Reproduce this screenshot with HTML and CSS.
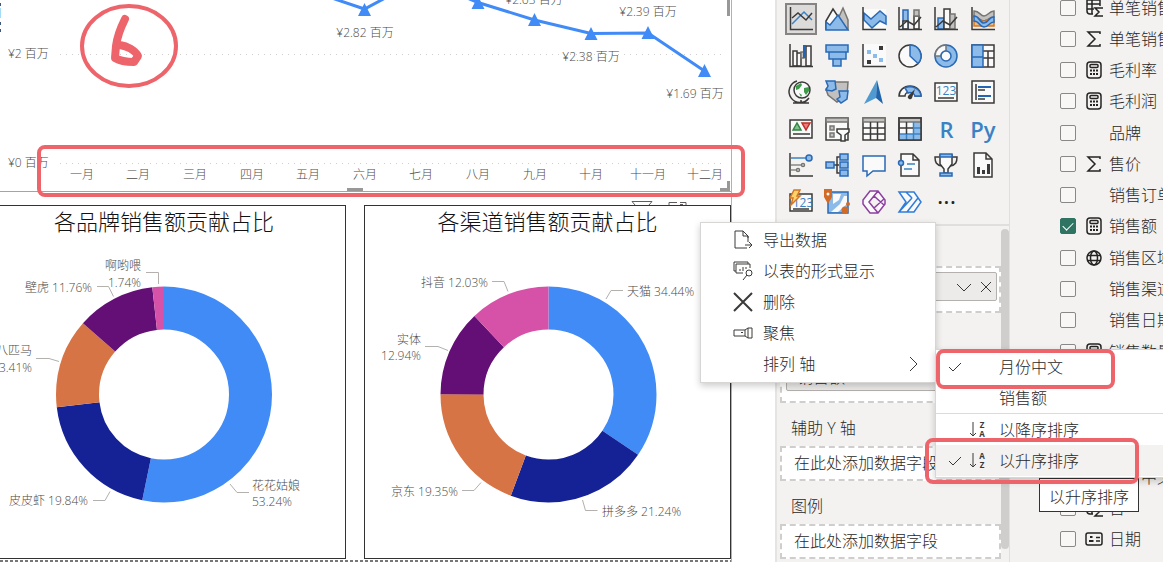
FILE: index.html
```html
<!DOCTYPE html>
<html lang="zh-CN">
<head>
<meta charset="utf-8">
<meta name="viewport" content="width=device-width, initial-scale=1">
<title>销售报表</title>
<link rel="stylesheet" href="styles.css">
</head>
<body>
<div class="app">
  <main class="canvas">
    <div class="report">
      <section class="line-visual">
        <svg class="chart" viewBox="0 0 731 191" role="img" aria-label="各月销售额">
          <path class="edge-light" d="M0 8h1v10h-1z"/>
          <path class="edge-dark" d="M0 3h1v3h-1zM0 22h1v3h-1zM0 29h1v3h-1z"/>
          <path class="gridline" d="M60 54.500H724M60 163.500H724"/>
          <polyline class="series" points="308,-10 364.500,9 421,-21 478,2.500 534.500,20 591,33.500 648,33 704.500,71"/>
          <path class="marker" d="M364.500 3l6.500 13h-13zM478-4l6.500 13h-13zM534.500 13l6.500 13h-13zM591 27l6.500 13h-13zM648 26l6.500 13h-13zM704.500 64l6.500 13h-13z"/>
          <g class="label">
            <text x="8" y="58">¥2 百万</text>
            <text x="8" y="167">¥0 百万</text>
          </g>
          <g class="label mid">
            <text x="365" y="37">¥2.82 百万</text>
            <text x="534" y="4">¥2.63 百万</text>
            <text x="591" y="61">¥2.38 百万</text>
            <text x="648" y="16">¥2.39 百万</text>
            <text x="695" y="98">¥1.69 百万</text>
            <text x="82" y="179">一月</text>
            <text x="138" y="179">二月</text>
            <text x="195" y="179">三月</text>
            <text x="252" y="179">四月</text>
            <text x="308" y="179">五月</text>
            <text x="365" y="179">六月</text>
            <text x="421" y="179">七月</text>
            <text x="478" y="179">八月</text>
            <text x="535" y="179">九月</text>
            <text x="591" y="179">十月</text>
            <text x="648" y="179">十一月</text>
            <text x="705" y="179">十二月</text>
          </g>
          <path class="handle" d="M347 188h16v3h-16zM727 0h3v16h-3zM727 181h3v10h-10v-3h7z"/>
        </svg>
      </section>
      <div class="visual-tools">
        <svg width="22" height="4" viewBox="0 0 22 4"><path d="M1 .500H21L18 4M1 .500L4 4"/></svg>
        <svg width="20" height="4" viewBox="0 0 20 4"><path d="M1 4V1.500H9M12 1.500H18V4M12 3.500H15"/></svg>
      </div>
      <div class="cards">
        <section class="card">
          <h2>各品牌销售额贡献占比</h2>
          <svg class="chart" viewBox="-18 236 362 322" role="img" aria-label="各品牌销售额贡献占比">
            <g class="ring" transform="rotate(-90 163 394.500)">
              <circle class="c1" cx="163" cy="394.500" r="86.500" pathLength="100" stroke-dasharray="53.240 100"/>
              <circle class="c2" cx="163" cy="394.500" r="86.500" pathLength="100" stroke-dasharray="19.840 100" stroke-dashoffset="-53.240"/>
              <circle class="c3" cx="163" cy="394.500" r="86.500" pathLength="100" stroke-dasharray="13.410 100" stroke-dashoffset="-73.080"/>
              <circle class="c4" cx="163" cy="394.500" r="86.500" pathLength="100" stroke-dasharray="11.760 100" stroke-dashoffset="-86.490"/>
              <circle class="c5" cx="163" cy="394.500" r="86.500" pathLength="100" stroke-dasharray="1.750 100" stroke-dashoffset="-98.250"/>
            </g>
            <path class="leader" d="M145 272.500h12.500V284M96 286.500h11.500l5 10M35 358.500h13l10 3M92 500.500h12l5-9M229 484l7 8.500h12"/>
            <g class="label end">
              <text x="140" y="270">啊哟喂</text>
              <text x="140" y="287">1.74%</text>
              <text x="91" y="292">壁虎 11.76%</text>
              <text x="31" y="355">八匹马</text>
              <text x="31" y="372">13.41%</text>
              <text x="87" y="505">皮皮虾 19.84%</text>
            </g>
            <g class="label">
              <text x="251" y="490">花花姑娘</text>
              <text x="251" y="506">53.24%</text>
            </g>
          </svg>
        </section>
        <section class="card">
          <h2>各渠道销售额贡献占比</h2>
          <svg class="chart" viewBox="365 236 365 322" role="img" aria-label="各渠道销售额贡献占比">
            <g class="ring" transform="rotate(-90 548.500 394.500)">
              <circle class="c1" cx="548.500" cy="394.500" r="86.500" pathLength="100" stroke-dasharray="34.440 100"/>
              <circle class="c2" cx="548.500" cy="394.500" r="86.500" pathLength="100" stroke-dasharray="21.240 100" stroke-dashoffset="-34.440"/>
              <circle class="c3" cx="548.500" cy="394.500" r="86.500" pathLength="100" stroke-dasharray="19.350 100" stroke-dashoffset="-55.680"/>
              <circle class="c4" cx="548.500" cy="394.500" r="86.500" pathLength="100" stroke-dasharray="12.940 100" stroke-dashoffset="-75.030"/>
              <circle class="c5" cx="548.500" cy="394.500" r="86.500" pathLength="100" stroke-dasharray="12.030 100" stroke-dashoffset="-87.970"/>
            </g>
            <path class="leader" d="M492 281.500h12l4 10M606 299l5-8.500h12M425 346.500h13l10 4M462 490.500h12l7-8M582.500 500l3 10.500h12"/>
            <g class="label end">
              <text x="488" y="287">抖音 12.03%</text>
              <text x="421" y="344">实体</text>
              <text x="421" y="360">12.94%</text>
              <text x="458" y="496">京东 19.35%</text>
            </g>
            <g class="label">
              <text x="627" y="296">天猫 34.44%</text>
              <text x="602" y="516">拼多多 21.24%</text>
            </g>
          </svg>
        </section>
      </div>
      <div class="page-edge"></div>
    </div>
  </main>

  <aside class="viz-pane" aria-label="可视化">
    <div class="gallery">
      <button class="on" aria-label="折线图"><svg viewBox="0 0 24 24"><path class="k" d="M1.500 0V22.500H24"/><path class="b" d="M3 17L15 5l8 8"/><path class="k" d="M3 11l6-5 8 7 6-7"/></svg></button>
      <button aria-label="分区图"><svg viewBox="0 0 24 24"><path class="gf" d="M12 14L18 1l5 12v9z"/><path class="wk" d="M1 14L8 2l8 12-4 8H1z"/><path class="bf" d="M1 23V15l4 3 8-10 10 15z"/></svg></button>
      <button aria-label="堆积面积图"><svg viewBox="0 0 24 24"><path class="w" d="M2 2h22v20H2z"/><path class="bf" d="M2 6l7 6 9-8 6 5v8l-6-3-8 7-8-8z"/><path class="k" d="M1 0V22.500H24"/></svg></button>
      <button aria-label="折线和堆积柱形图"><svg viewBox="0 0 24 24"><path class="bf" d="M5 3h5v19H5z"/><path class="wk" d="M5 14h5v8H5zM16 9h5v13h-5z"/><path class="gf" d="M16 3h5v6h-5z"/><path class="k" d="M1 0V22.500H24M2 20l7-6 7 4 7-8"/></svg></button>
      <button aria-label="折线和簇状柱形图"><svg viewBox="0 0 24 24"><path class="bf" d="M4 11h6v11H4z"/><path class="wk" d="M10 2h6v20h-6z"/><path class="gf" d="M16 7h5v15h-5z"/><path class="k" d="M1 0V22.500H24M2 20l7-6 7 4 7-8"/></svg></button>
      <button aria-label="功能区图表"><svg viewBox="0 0 24 24"><path class="gf" d="M3 4c6 0 6 5 10 5s5-5 10-5v6c-5 0-6 4-10 4S8 10 3 10z"/><path class="of" d="M3 14h8v5H3zM15 13h8v6h-8z"/><path class="bf" d="M3 9c6 0 5 7 10 7s5-7 10-6v5c-5 0-5 5-10 5S9 14 3 14z"/><path class="k" d="M1 0V22.500H24"/></svg></button>

      <button aria-label="瀑布图"><svg viewBox="0 0 24 24"><path class="wk" d="M4 7h4v15H4zM8 9h4v13H8zM17 2h5v20h-5z"/><path class="gf" d="M12 8h3v6h-3z"/><path class="bb" d="M14 1h3v13h-3z"/><path class="k" d="M1 0V22.500H24"/></svg></button>
      <button aria-label="漏斗图"><svg viewBox="0 0 24 24"><path class="bf" d="M1 1h22v7H1zM4 8h17v7H4zM8 15h8v7H8z"/></svg></button>
      <button aria-label="散点图"><svg viewBox="0 0 24 24"><path class="w" d="M2 0h22v22H2z"/><path class="kk" d="M17 2h4v4h-4zM5 16h4v4H5z"/><path class="bl" d="M5 6h4v4H5zM11 10h4v4h-4zM17 14h4v4h-4z"/><path class="k" d="M1 0V22.500H24"/></svg></button>
      <button aria-label="饼图"><svg viewBox="0 0 24 24"><circle class="wk" cx="12" cy="12" r="11"/><path class="bf" d="M12 1v11l8 7.500A11 11 0 0 0 12 1z"/></svg></button>
      <button aria-label="环形图"><svg viewBox="0 0 24 24"><circle class="bf" cx="12" cy="12" r="11"/><path class="wg" d="M1 12A11 11 0 0 1 12 1v6a5 5 0 0 0-5 5z"/><circle class="wb" cx="12" cy="12" r="5"/></svg></button>
      <button aria-label="树状图"><svg viewBox="0 0 24 24"><path class="wk" d="M1 1h22v22H1zM12 7h11M12 14h11M17 7v16"/><path class="bf" d="M1 1h11v22H1zM1 13h11"/></svg></button>

      <button aria-label="地图"><svg viewBox="0 0 24 24"><circle class="wk" cx="13" cy="10" r="8"/><path class="green" d="M7 6l5-3 1 2-3 4-3 1zM15 8l5-1v4l-3 4-2-3zM10 13l3 2-1 2z"/><path class="k" d="M8 1a11 11 0 1 0 12 17M12 20v3M4 23h16"/></svg></button>
      <button aria-label="着色地图"><svg viewBox="0 0 24 24"><path class="gf" d="M9 2h14l-1 14-10 6-9-7-2-6z"/><path class="bf" d="M1 1h9l1 8-4 2-6-1 2-4zM14 11h9l-1 8-6 4-4-4 3-2z"/></svg></button>
      <button aria-label="箭头地图"><svg viewBox="0 0 24 24"><path fill="#4f9ad0" d="M15 0L2 24l12-6z"/><path fill="#1f65ac" d="M15 0l6 24-7-6z"/></svg></button>
      <button aria-label="仪表"><svg viewBox="0 0 24 24"><path class="wk" d="M1 16a11 10 0 0 1 22 0h-6a5 4 0 0 0-10 0z"/><path class="bf" d="M7 8a11 10 0 0 1 16 8h-6a5 4 0 0 0-7-3z"/><path class="kk" d="M17 9l-3 9a2 2 0 0 1-4-2z"/></svg></button>
      <button aria-label="卡片图"><svg viewBox="0 0 24 24"><path class="wk" d="M1 3h22v18H1z"/><text class="num" x="12" y="15">123</text><path class="k" d="M4 18h16"/></svg></button>
      <button aria-label="多行卡"><svg viewBox="0 0 24 24"><path class="wk" d="M1 1h22v22H1zM5 4v16"/><path class="bb" d="M7 6h13v2H7zM7 15h13v2H7z"/><path class="k" d="M7 10h7M7 19h7"/></svg></button>

      <button aria-label="KPI"><svg viewBox="0 0 24 24"><path class="wk" d="M1 3h22v18H1z"/><path class="gt" d="M4 13l4-7 4 7z"/><path class="rt" d="M13 6h8l-4 7z"/><path class="k" d="M4 17h17"/></svg></button>
      <button aria-label="切片器"><svg viewBox="0 0 24 24"><path class="wk" d="M1 1h22v22H1z"/><path class="gf" d="M1 1h22v4H1zM5 9h4v4H5zM5 16h4v4H5z"/><path class="wk" d="M12 12h12v3l-4 3v6h-4v-6l-4-3z"/></svg></button>
      <button aria-label="表"><svg viewBox="0 0 24 24"><path class="wk" d="M1 1h22v22H1z"/><path class="gf" d="M1 1h22v4H1z"/><path class="k" d="M1 11h22M1 17h22M8.500 5v18M15.500 5v18"/></svg></button>
      <button aria-label="矩阵"><svg viewBox="0 0 24 24"><path class="wk" d="M1 1h22v22H1z"/><path class="bl" d="M15 5h8v18H1v-6h14z"/><path class="gf" d="M1 1h22v4H1z"/><path class="b" d="M1 17h22M15.500 5v18M15.500 11H23M8.500 17v6"/><path class="k" d="M1 11h14M8.500 5v12M1 1h22v22H1z"/></svg></button>
      <button class="script">R</button>
      <button class="script">Py</button>

      <button aria-label="关键影响者"><svg viewBox="0 0 24 24"><path class="b" d="M2 5h15"/><circle class="bf" cx="20" cy="5" r="3"/><path class="g" d="M2 12h11M2 17h6"/><circle class="wg" cx="14" cy="12" r="1.500"/><circle class="wg" cx="9" cy="17" r="1.500"/><path class="k" d="M1 0V23H24"/></svg></button>
      <button aria-label="分解树"><svg viewBox="0 0 24 24"><path class="k" d="M9 12h5M20 4h-8v16h8"/><path class="bf" d="M1 9h8v6H1zM15 1h8v6h-8zM15 9h8v6h-8zM15 17h8v6h-8z"/></svg></button>
      <button aria-label="问答"><svg viewBox="0 0 24 24"><path class="wb" d="M1 3h22v15H11l-6 5v-5H1z"/></svg></button>
      <button aria-label="智能叙述"><svg viewBox="0 0 24 24"><path class="wk" d="M3 1h12l6 6v16H3zM15 1v6h6"/><circle class="bf" cx="3" cy="10" r="2.500"/><path class="b" d="M9 11h8M6 16h8"/></svg></button>
      <button aria-label="目标"><svg viewBox="0 0 24 24"><path class="wk" d="M6 2h12v9l-4 5v4h-4v-4l-4-5z"/><path class="k" d="M6 4H1c0 5 1 8 7 9M18 4h5c0 5-1 8-7 9"/><path class="bf" d="M6 1h12v3H6zM6 20h12v3H6z"/></svg></button>
      <button aria-label="分页报表"><svg viewBox="0 0 24 24"><path class="wk" d="M3 0h12l6 6v18H3zM15 0v6h6"/><path class="kk" d="M6 14h3v7H6zM11 17h3v4h-3zM16 11h3v10h-3z"/></svg></button>

      <button aria-label="卡片图（新）"><svg viewBox="0 0 24 24"><path class="wk" d="M1 4h22v17H1z"/><text class="num" x="14" y="17">123</text><path class="k" d="M4 19h16"/><path class="yf" d="M5 0h6L8 6h3L2 15l2-7H1z"/></svg></button>
      <button aria-label="ArcGIS"><svg viewBox="0 0 24 24"><path class="bf" d="M3 2h20v21H3z"/><path class="w" d="M8 4h8l-2 6-6 4zM19 6h3v8l-9 8H6l9-8z"/><path fill="#d16b25" d="M-1-1h8v8l-4 7-4-7z"/><circle class="w" cx="3" cy="4" r="1.500"/><circle fill="#d16b25" cx="20" cy="20" r="3.500"/><circle fill="#d16b25" cx="23" cy="14" r="2"/></svg></button>
      <button aria-label="Power Apps"><svg viewBox="0 0 24 24"><path class="p" d="M8 1h8l7 9v4l-7 9H8l-7-9v-4zM16 1L7 12l9 11M12 6l10 9M22 9L12 18"/></svg></button>
      <button aria-label="Power Automate"><svg viewBox="0 0 24 24"><path class="auto" d="M1 2h15l7 10-7 10H1l7-10zM1 22L14 8M9 22l11-14M8 2l6 6"/></svg></button>
      <button class="more" aria-label="更多视觉对象">···</button>
    </div>
    <div class="wells">
      <div class="well-list">
        <h3>X 轴</h3>
        <div class="well"><div class="pill"><span>月份中文</span><svg width="36" height="14" viewBox="0 0 36 14"><path d="M1 4l7 7 7-7M25 2l10 10M35 2L25 12"/></svg></div></div>
        <h3>Y 轴</h3>
        <div class="well"><div class="pill"><span>销售额</span></div></div>
        <h3>辅助 Y 轴</h3>
        <div class="well hint">在此处添加数据字段</div>
        <h3>图例</h3>
        <div class="well hint">在此处添加数据字段</div>
      </div>
      <div class="scroll"><div class="thumb"></div></div>
    </div>
  </aside>

  <aside class="fields-pane" aria-label="数据">
    <svg class="defs" width="0" height="0" aria-hidden="true">
      <symbol id="sum" viewBox="0 0 18 18"><path d="M15 4V2H3l7 7-7 7h12v-2"/></symbol>
      <symbol id="calc" viewBox="0 0 18 18"><rect x="2" y="1" width="14" height="16" rx="3"/><rect x="5" y="3.500" width="8" height="3" rx="1"/><path class="dots" d="M5 9.500h2M8 9.500h2M11 9.500h2M5 13h2M8 13h2M11 13h2"/></symbol>
      <symbol id="tsum" viewBox="0 0 18 18"><path d="M8 15H5a3 3 0 0 1-3-3V1h13v6M2 5h13M7 1v14M2 10h7M18 9h-8l4 4-4 4h8"/></symbol>
      <symbol id="globe" viewBox="0 0 18 18"><circle cx="9" cy="9" r="7"/><ellipse cx="9" cy="9" rx="3.500" ry="7"/><path d="M2.500 6.500h13M2.500 11.500h13"/></symbol>
      <symbol id="idcard" viewBox="0 0 18 18"><rect x="1" y="3" width="16" height="12" rx="2"/><path class="dots" d="M5 7h2.500M4 11h4.500"/><path d="M11 7.500h4M11 11h4"/></symbol>
    </svg>
    <ul class="fields">
      <li><label><input type="checkbox"><svg><use href="#tsum"/></svg><span>单笔销售额</span></label></li>
      <li><label><input type="checkbox"><svg><use href="#sum"/></svg><span>单笔销售量</span></label></li>
      <li><label><input type="checkbox"><svg><use href="#calc"/></svg><span>毛利率</span></label></li>
      <li><label><input type="checkbox"><svg><use href="#calc"/></svg><span>毛利润</span></label></li>
      <li><label><input type="checkbox"><svg></svg><span>品牌</span></label></li>
      <li><label><input type="checkbox"><svg><use href="#sum"/></svg><span>售价</span></label></li>
      <li><label><input type="checkbox"><svg></svg><span>销售订单</span></label></li>
      <li><label><input type="checkbox" checked><svg><use href="#calc"/></svg><span>销售额</span></label></li>
      <li><label><input type="checkbox"><svg><use href="#globe"/></svg><span>销售区域</span></label></li>
      <li><label><input type="checkbox"><svg></svg><span>销售渠道</span></label></li>
      <li><label><input type="checkbox"><svg></svg><span>销售日期</span></label></li>
      <li><label><input type="checkbox"><svg><use href="#calc"/></svg><span>销售数量</span></label></li>
      <li class="fold"></li>
      <li><label><input type="checkbox"><svg></svg><span>月份中文</span></label></li>
      <li><label><input type="checkbox"><svg><use href="#tsum"/></svg><span>日</span></label></li>
      <li><label><input type="checkbox"><svg><use href="#idcard"/></svg><span>日期</span></label></li>
      <li></li>
    </ul>
  </aside>
</div>

<div class="menu main-menu" role="menu">
  <button role="menuitem"><svg viewBox="0 0 20 20"><path d="M15 8V6l-5-5H2v17h12M10 1v5h5v6M12 15h7M16 12l3 3-3 3"/></svg>导出数据</button>
  <button role="menuitem"><svg viewBox="0 0 20 20"><path d="M3 10H1V1h14v2M3 3h14v4M3 3v9h7M7 10V8M10 10V6M13 8V6"/><circle cx="16" cy="12" r="3"/><path d="M14 14l-4 5"/></svg>以表的形式显示</button>
  <button role="menuitem"><svg viewBox="0 0 20 20"><path class="bold" d="M1 1l18 18M19 1L1 19"/></svg>删除</button>
  <button role="menuitem"><svg viewBox="0 0 20 20"><path d="M1 7h11l3-2h4v10h-4l-3-2H1zM15 5v10M12 7v6M8 9.500h2"/></svg>聚焦</button>
  <button role="menuitem" aria-haspopup="menu"><svg viewBox="0 0 20 20"></svg>排列 轴<svg class="next" viewBox="0 0 10 18"><path d="M1 2l7 7-7 7"/></svg></button>
</div>

<div class="tooltip" role="tooltip">以升序排序</div>
<div class="menu sub-menu" role="menu">
  <button role="menuitemradio" aria-checked="true"><svg class="tick" viewBox="0 0 14 12"><path d="M1 6l4 4 8-8"/></svg><i></i>月份中文</button>
  <button role="menuitemradio"><i class="tick"></i><i></i>销售额</button>
  <hr>
  <button role="menuitemradio"><i class="tick"></i><svg class="sort" viewBox="0 0 18 18"><path d="M4 1v14M1 12l3 3 3-3"/><text x="13" y="7">Z</text><text x="13" y="16">A</text></svg>以降序排序</button>
  <button class="hover" role="menuitemradio" aria-checked="true"><svg class="tick" viewBox="0 0 14 12"><path d="M1 6l4 4 8-8"/></svg><svg class="sort" viewBox="0 0 18 18"><path d="M4 1v14M1 12l3 3 3-3"/><text x="13" y="7">A</text><text x="13" y="16">Z</text></svg>以升序排序</button>
</div>

<svg class="ink step" viewBox="0 0 98 84" role="img" aria-label="6"><ellipse cx="49" cy="42" rx="47" ry="40"/><path d="M45 15C40 25 37 34 36 42L35 54C40 57 47 58 54 58L58 52C55 46 47 42 40 41"/></svg>
<div class="ink months"></div>
<div class="ink by-month"></div>
<div class="ink ascending"></div>
</body>
</html>
```
FILE: styles.css
```css
* { box-sizing: border-box; }

body {
  margin: 0;
  overflow: hidden;
  background: #fff;
  color: #292827;
  font: 300 16px/20px "Open Sans", "Noto Sans CJK SC", sans-serif;
}

button {
  padding: 0;
  border: 0;
  background: none;
  color: inherit;
  font: inherit;
}

svg { display: block; flex: none; fill: none; overflow: visible; }

.app { display: flex; height: 100vh; overflow: hidden; }

/* Report canvas */
.canvas { flex: 1; min-width: 0; padding-right: 43px; overflow: hidden; }
.report { border-right: 1px solid #b3b0ad; }
.line-visual { border-bottom: 1px solid #a6a4a2; }
.chart { width: 100%; height: auto; overflow: hidden; }
.gridline { stroke: #d0cecc; stroke-dasharray: 1 5; }
.series { stroke: #418bf7; stroke-width: 3; }
.marker { fill: #418bf7; }
.handle { fill: #9a9896; }
.edge-light { fill: #a5dcf8; }
.edge-dark { fill: #3f587c; }
.label { fill: #4c4a48; font-size: 12px; }
.mid { text-anchor: middle; }
.end { text-anchor: end; }

.visual-tools {
  display: flex;
  justify-content: flex-end;
  align-items: flex-end;
  gap: 15px;
  height: 13px;
  padding-right: 43px;
}
.visual-tools svg { overflow: hidden; stroke: #605e5c; }

.cards { display: grid; grid-template-columns: 364fr 367fr; gap: 18px; margin-left: -18px; }
.card { border: 1px solid #333; overflow: hidden; }
.card h2 {
  margin: 0;
  color: #111;
  font-size: 22px;
  font-weight: 300;
  line-height: 30px;
  text-align: center;
}
.ring { stroke-width: 43; }
.c1 { stroke: #418bf7; }
.c2 { stroke: #152295; }
.c3 { stroke: #d77445; }
.c4 { stroke: #640f76; }
.c5 { stroke: #d652a9; }
.leader { stroke: #b3b0ad; }
.page-edge {
  height: 2px;
  margin-top: 1px;
  background: repeating-linear-gradient(90deg, #777 0 3px, #fff 3px 5px);
}

/* Visualizations pane */
.viz-pane {
  display: flex;
  flex-direction: column;
  width: 235px;
  border-left: 2px solid #e6e4e2;
  border-right: 1px solid #e1dfdd;
  background: #f3f2f1;
}
.gallery {
  display: grid;
  grid-template: repeat(6, 1fr) / repeat(6, 1fr);
  height: 226px;
  padding: 1px 8px 4px 6px;
  border-bottom: 2px solid #e1dfdd;
}
.gallery button { display: grid; place-items: center; place-self: center; width: 32px; height: 32px; }
.gallery svg { width: 24px; height: 24px; stroke-width: 1.500; }
.gallery .on { border: 2px solid #868482; background: #dddbd9; }
.gallery .script { color: #3b82c4; font-size: 22px; font-weight: 600; line-height: 24px; }
.gallery .more { color: #252423; font-size: 24px; font-weight: 400; }
.num { fill: #3b82c4; font-size: 12px; text-anchor: middle; font-weight: 400; }
.k { stroke: #3b3a39; }
.b { stroke: #3b82c4; }
.g { stroke: #888; }
.w { fill: #fafafa; }
.kk { fill: #3b3a39; }
.bl { fill: #8cbbe9; }
.bb { fill: #2464b4; }
.bf { fill: #8cbbe9; stroke: #2969b5; }
.gf { fill: #c3c1bf; stroke: #777573; }
.wk { fill: #fafafa; stroke: #3b3a39; }
.wb { fill: #fafafa; stroke: #2969b5; }
.wg { fill: #fafafa; stroke: #777573; }
.of { fill: #f4b878; stroke: #d57724; }
.yf { fill: #ffd36b; stroke: #d57724; }
.green { fill: #3f9a4c; }
.gt { fill: #7fc38a; stroke: #348343; }
.rt { fill: #ef7d75; stroke: #ba2f2a; }
.p { fill: #fafafa; stroke: #8c3fa0; }
.auto { fill: #fafafa; stroke: #2f7cda; }

.wells { display: flex; flex: 1; min-height: 0; overflow: hidden; }
.well-list { flex: 1; padding-left: 3px; }
.well-list h3 { margin: 0; padding: 7px 0 0 11px; font-size: 16px; font-weight: 300; line-height: 36px; }
.well-list h3:first-child { line-height: 33px; }
.well { padding: 4px 2px 10px 4px; border: 2px dashed #d0cecc; background: #fff; }
.well.hint { padding: 5px 12px 6px; }
.pill {
  display: flex;
  align-items: center;
  justify-content: space-between;
  height: 29px;
  padding: 0 4px 0 10px;
  border: 1px solid #b3b0ad;
  border-radius: 2px;
  background: #edebe9;
}
.pill svg { stroke: #3b3a39; }
.scroll { width: 8px; padding-top: 3px; }
.thumb { height: 96%; border-radius: 4px; background: #d0cecc; }

/* Data pane */
.fields-pane { display: flex; width: 153px; padding-left: 50px; background: #f3f2f1; overflow: hidden; }
.fields { display: flex; flex-direction: column; flex: 1; margin: -8px 0 -24px; padding: 0; list-style: none; }
.fields li { flex: 1; }
.fields .fold { flex: 3; }
.fields label { display: flex; align-items: center; height: 100%; white-space: nowrap; }
.fields input {
  appearance: none;
  flex: none;
  width: 16px;
  height: 16px;
  margin: 0 9px 0 0;
  border: 1px solid #8a8886;
  border-radius: 2px;
  background: #f8f7f6;
}
.fields input:checked {
  border-color: #2f7463;
  background: #2f7463;
}
.fields input:checked::before {
  display: block;
  width: 9px;
  height: 5px;
  margin: 3px 2px;
  border: solid #fff;
  border-width: 0 0 1px 1px;
  content: "";
  rotate: -45deg;
}
.fields svg { width: 18px; height: 18px; margin-right: 6px; stroke: #252423; stroke-width: 1.500; }
.dots { stroke-width: 2; }
.defs { position: absolute; }

/* Menus */
.menu {
  position: absolute;
  padding: 1px 0;
  border: 1px solid #d8d6d4;
  background: #fff;
  box-shadow: 0 3px 7px rgba(0, 0, 0, .2);
}
.menu button { display: flex; align-items: center; width: 100%; height: 31px; text-align: left; }
.menu svg { stroke: #3b3a39; }
.main-menu { top: 222px; left: 700px; width: 236px; padding-bottom: 3px; }
.main-menu button { gap: 10px; padding: 0 16px 0 32px; }
.main-menu svg { width: 20px; height: 20px; }
.main-menu .next { width: 10px; height: 18px; margin-left: auto; }
.bold { stroke-width: 2; }
.sub-menu { top: 349px; left: 935px; right: -20px; }
.sub-menu button { padding-left: 12px; }
.sub-menu .hover { background: #f3f2f1; }
.sub-menu hr { height: 1px; margin: 0; border: 0; background: #dddbd9; }
.sub-menu i { width: 18px; margin-right: 12px; }
.sub-menu .tick { width: 14px; height: 12px; margin-right: 7px; }
.sub-menu .sort { width: 18px; height: 18px; margin-right: 12px; }
.sort text { fill: #3b3a39; stroke: none; font-size: 8px; font-weight: 700; text-anchor: middle; }
.tooltip {
  position: absolute;
  top: 478px;
  left: 1039px;
  padding: 8px 9px 4px;
  border: 1px solid #333;
  background: #fff;
}

/* Pen annotations */
.ink { position: absolute; border: 4px solid #ed646b; border-radius: 8px; pointer-events: none; }
.step { top: 4px; left: 80px; width: 98px; height: 84px; border: 0; stroke: #ed646b; stroke-width: 4; }
.step path { stroke-width: 8; stroke-linecap: round; stroke-linejoin: round; }
.months { top: 145px; left: 37px; width: 708px; height: 52px; }
.by-month { top: 349px; left: 936px; width: 179px; height: 40px; }
.ascending { top: 438px; left: 925px; width: 214px; height: 46px; }
```
